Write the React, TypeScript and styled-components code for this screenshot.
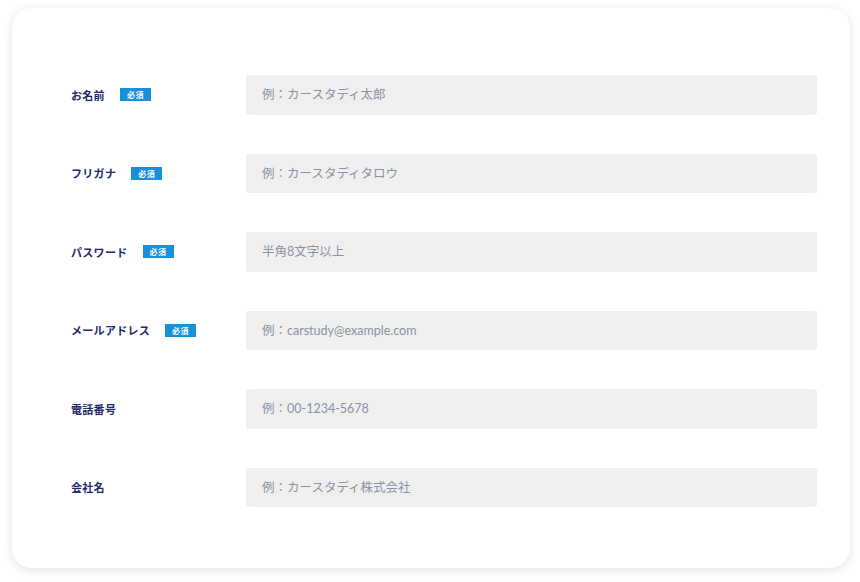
import React from 'react';
import styled, { createGlobalStyle } from 'styled-components';

const GlobalStyle = createGlobalStyle`
  body {
    margin: 0;
    background: #ffffff;
    font-family: "Noto Sans", "Noto Sans CJK JP", sans-serif;
  }
`;

const Page = styled.div`
  padding: 8px 10px 14px 12px;
`;

const Card = styled.form`
  background: #ffffff;
  border-radius: 20px;
  box-shadow: 0 2px 10px rgba(40, 50, 80, 0.14);
  height: 560px;
  box-sizing: border-box;
  padding: 67px 33px 0 59px;
  display: flex;
  flex-direction: column;
  gap: 39px;
`;

const Row = styled.div`
  display: grid;
  grid-template-columns: 175px 1fr;
  align-items: center;
`;

const LabelWrap = styled.div`
  display: flex;
  align-items: center;
  gap: 15px;
`;

const Label = styled.label`
  font-family: "Noto Sans CJK JP", sans-serif;
  font-size: 11px;
  font-weight: 700;
  color: #1e2a6a;
  letter-spacing: 0.3px;
`;

const Badge = styled.span`
  display: inline-flex;
  align-items: center;
  justify-content: center;
  width: 31px;
  height: 13px;
  background: #1a90d9;
  color: #ffffff;
  font-family: "Noto Sans CJK JP", sans-serif;
  font-size: 8px;
  font-weight: 700;
  letter-spacing: 0.5px;
`;

const Field = styled.input`
  height: 39.5px;
  box-sizing: border-box;
  border: none;
  border-radius: 3px;
  background: #efefed;
  padding: 0 16px;
  font-family: "Lato", "Noto Sans CJK JP", sans-serif;
  font-size: 12.5px;
  color: #333;
  outline: none;
  &::placeholder {
    color: #8a93a6;
  }
`;

const fields = [
  { label: 'お名前', required: true, placeholder: '例：カースタディ太郎' },
  { label: 'フリガナ', required: true, placeholder: '例：カースタディタロウ' },
  { label: 'パスワード', required: true, placeholder: '半角8文字以上', type: 'password' },
  { label: 'メールアドレス', required: true, placeholder: '例：carstudy@example.com' },
  { label: '電話番号', required: false, placeholder: '例：00-1234-5678' },
  { label: '会社名', required: false, placeholder: '例：カースタディ株式会社' },
];

const App = () => {
  return (
    <Page>
      <GlobalStyle />
      <Card>
        {fields.map((f) => (
          <Row key={f.label}>
            <LabelWrap>
              <Label>{f.label}</Label>
              {f.required && <Badge>必須</Badge>}
            </LabelWrap>
            <Field type={f.type || 'text'} placeholder={f.placeholder} />
          </Row>
        ))}
      </Card>
    </Page>
  );
};

export default App;
